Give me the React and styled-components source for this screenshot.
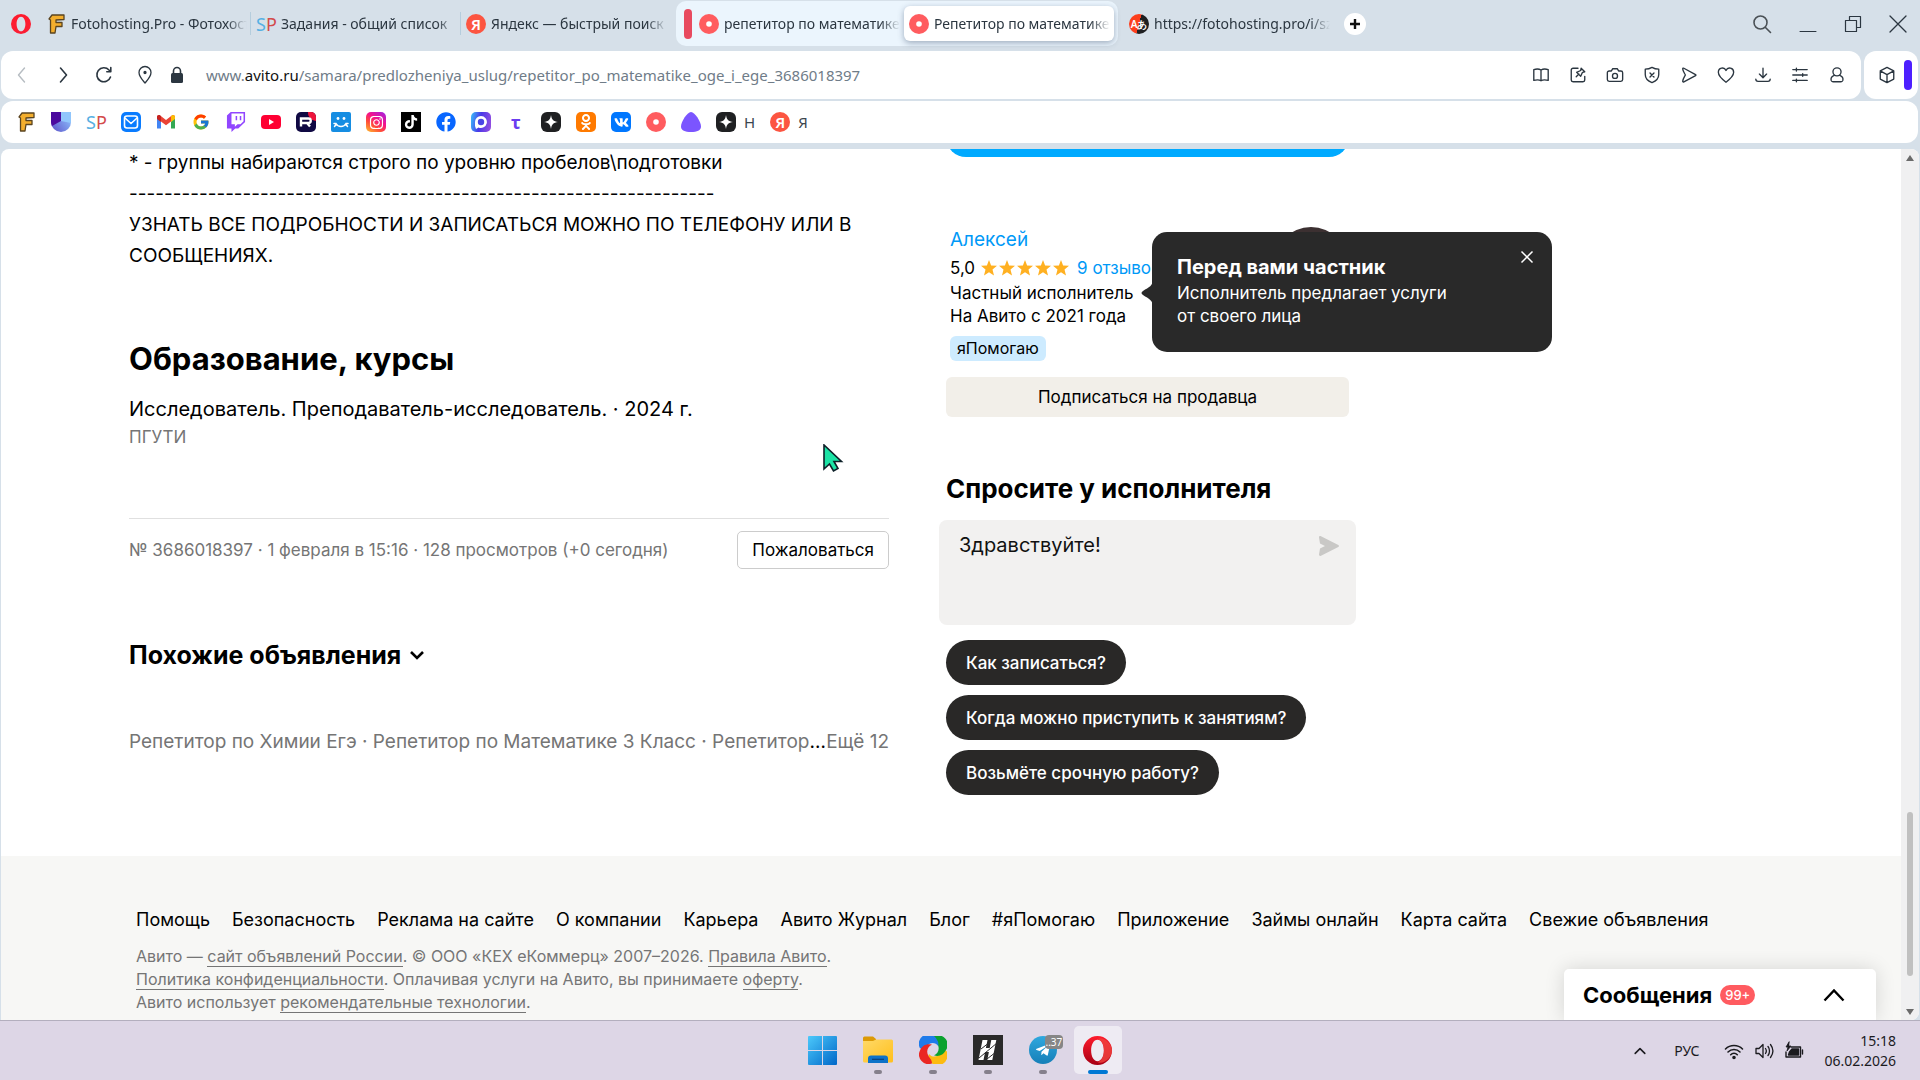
import React from "react";
import styled, { createGlobalStyle, css } from "styled-components";
import { FaTwitch, FaVk, FaOdnoklassniki, FaFacebook, FaInstagram, FaTelegramPlane, FaTiktok } from "react-icons/fa";
import { FcGoogle } from "react-icons/fc";

const Global = createGlobalStyle`
  * { box-sizing: border-box; }
  body { margin: 0; background: #d6e0e9; font-family: Inter, "Noto Sans", sans-serif; color: #000; }
  button { font: inherit; color: inherit; border: 0; padding: 0; background: none; cursor: pointer; }
  a { color: inherit; text-decoration: none; }
  h2, h3, p { margin: 0; }
  svg { display: block; flex: none; }
`;

const Shell = styled.div`
  display: flex;
  flex-direction: column;
  height: 100vh;
  overflow: hidden;
`;

/* ---------- browser chrome ---------- */

const Chrome = styled.header`
  font-family: "Noto Sans", "Open Sans", sans-serif;
  color: #2b3640;
`;

const TabBar = styled.div`
  display: flex;
  align-items: center;
  height: 51px;
  padding: 0 14px 4px 11px;
`;

const Tabs = styled.nav`
  display: flex;
  align-items: center;
  margin-left: 10px;
`;

const Tab = styled.button`
  display: flex;
  align-items: center;
  gap: 5px;
  width: 210px;
  height: 35px;
  padding: 0 4px 0 5px;
  font-size: 14px;
  text-align: left;
  ${(p) =>
    p.$divider &&
    css`
      background: linear-gradient(#b5cddd, #b5cddd) right center / 1px 23px no-repeat;
    `}
  ${(p) =>
    p.$active &&
    css`
      background: #fff;
      border-radius: 6px;
      box-shadow: 0 2px 6px rgba(60, 80, 110, 0.45);
    `}
`;

const TabTitle = styled.span`
  flex: 1;
  overflow: hidden;
  white-space: nowrap;
  line-height: 24px;
  mask-image: linear-gradient(90deg, #000 calc(100% - 20px), transparent);
`;

const TabGroup = styled.div`
  display: flex;
  align-items: center;
  height: 45px;
  margin: 0 6px 0 5px;
  padding: 0 4px 0 8px;
  border-radius: 10px;
  background: #ebf5fd;
`;

const GroupMark = styled.span`
  width: 8px;
  height: 30px;
  margin-right: 2px;
  border-radius: 4px;
  background: #e84a5f;
`;

const PlusButton = styled.button`
  display: grid;
  place-items: center;
  width: 22px;
  height: 22px;
  margin-left: 10px;
  border-radius: 50%;
  background: #fff;
`;

const WindowControls = styled.div`
  display: flex;
  align-items: center;
  gap: 27px;
  margin-left: auto;
`;

const AddressRow = styled.div`
  display: flex;
  gap: 3px;
  height: 48px;
  padding: 0 2px 0 1px;
`;

const Panel = styled.div`
  display: flex;
  align-items: center;
  border-radius: 12px;
  background: #fff;
`;

const AddressPanel = styled(Panel)`
  flex: 1;
  padding: 0 12px 0 9px;
`;

const SidePanel = styled(Panel)`
  gap: 7px;
  padding: 0 6px 0 13px;
`;

const PurpleMark = styled.span`
  width: 8px;
  height: 30px;
  border-radius: 4px;
  background: #4d1fff;
`;

const IconButton = styled.button`
  display: grid;
  place-items: center;
  width: ${(p) => p.$w || 24}px;
  height: 24px;
`;

const NavIcons = styled.div`
  display: flex;
  gap: 17px;
`;

const Address = styled.label`
  display: flex;
  flex: 1;
  margin-left: 9px;
  font-size: 15px;
  line-height: 24px;
  color: #6f7c88;
`;

const Domain = styled.span`
  color: #111;
`;

const PathInput = styled.input`
  flex: 1;
  padding: 0;
  border: 0;
  outline: 0;
  background: none;
  font: inherit;
  color: inherit;
`;

const ToolIcons = styled.div`
  display: flex;
  gap: 13px;
`;

const Bookmarks = styled.nav`
  display: flex;
  align-items: center;
  gap: 15px;
  height: 42px;
  margin: 2px 2px 6px 1px;
  padding-left: 15px;
  border-radius: 12px;
  background: #fff;
`;

const Bookmark = styled.a`
  display: flex;
  align-items: center;
  gap: 8px;
  font-size: 15px;
  color: #3b4650;
`;

const Tile = styled.span`
  display: grid;
  place-items: center;
  flex: none;
  width: 20px;
  height: 20px;
  color: ${(p) => p.$color || "#fff"};
  background: ${(p) => p.$bg || "none"};
  border-radius: ${(p) => p.$radius || 0}px;
  font-size: ${(p) => p.$size || 17}px;
  font-weight: ${(p) => p.$weight || 400};
  line-height: 20px;
`;

/* ---------- page ---------- */

const Viewport = styled.main`
  position: relative;
  display: flex;
  flex: 1;
  min-height: 0;
  margin: 0 1px;
  overflow: hidden;
  border-radius: 8px 8px 8px 0;
  background: #fff;
`;

const Page = styled.div`
  display: flex;
  flex: 1;
  flex-direction: column;
  min-width: 0;
  margin-top: -52px;
`;

const Columns = styled.div`
  display: grid;
  grid-template-columns: 760px 403px;
  column-gap: 57px;
  padding: 0 0 61px 128px;
`;

const Left = styled.article`
  min-width: 0;
  padding-top: 50px;
`;

const Description = styled.p`
  font-size: 19px;
  line-height: 31px;
  white-space: nowrap;
`;

const Title = styled.h2`
  margin-top: 68px;
  font-size: 31px;
  line-height: 40px;
`;

const Education = styled.p`
  margin-top: 16px;
  font-size: 20px;
  line-height: 28px;
  white-space: pre;
`;

const School = styled.p`
  font-size: 17px;
  line-height: 28px;
  color: #757575;
`;

const Meta = styled.div`
  display: flex;
  align-items: center;
  justify-content: space-between;
  margin-top: 67px;
  padding-top: 12px;
  border-top: 1px solid #e0e0e0;
  font-size: 17px;
  color: #757575;
`;

const Report = styled.button`
  height: 38px;
  padding: 0 14px;
  border: 1px solid #ccc;
  border-radius: 5px;
  color: #000;
`;

const Subtitle = styled.h3`
  display: flex;
  align-items: center;
  gap: 8px;
  margin-top: ${(p) => p.$top}px;
  font-size: ${(p) => p.$size}px;
  line-height: 34px;
  white-space: nowrap;
`;

const Related = styled.div`
  display: flex;
  margin-top: 56px;
  font-size: 19px;
  line-height: 28px;
`;

const RelatedList = styled.div`
  flex: 1;
  overflow: hidden;
  text-overflow: ellipsis;
  white-space: nowrap;
`;

const GreyText = styled.span`
  color: #757575;
`;

const Right = styled.aside`
  display: flex;
  flex-direction: column;
`;

const WriteButton = styled.button`
  height: 60px;
  border-radius: 20px;
  background: #00aaff;
`;

const Seller = styled.section`
  position: relative;
  display: flex;
  justify-content: space-between;
  height: 135px;
  margin-top: 69px;
  padding-left: 4px;
  font-size: 17px;
  line-height: 23px;
  white-space: nowrap;
`;

const SellerLink = styled.a`
  color: #0099f7;
`;

const SellerName = styled(SellerLink)`
  display: block;
  font-size: 19px;
  line-height: 28px;
`;

const Rating = styled.div`
  display: flex;
  align-items: center;
  gap: 8px;
  line-height: 28px;
`;

const Stars = styled.span`
  display: flex;
  gap: 2px;
  margin-left: -2px;
`;

const HelpTag = styled.span`
  display: inline-block;
  height: 25px;
  margin-top: 8px;
  padding: 0 7px;
  border-radius: 6px;
  background: #cdebff;
  font-size: 16px;
  line-height: 25px;
`;

const Avatar = styled.span`
  width: 76px;
  height: 76px;
  margin-top: 1px;
  border-radius: 50%;
  background: #3c3031;
`;

const Tooltip = styled.div`
  position: absolute;
  top: 6px;
  left: 206px;
  width: 400px;
  height: 120px;
  padding: 20px 25px;
  border-radius: 15px;
  background: #292929;
  color: #fff;
  font-size: 17px;
  line-height: 23px;
`;

const TooltipTitle = styled.div`
  font-size: 20px;
  font-weight: 700;
  line-height: 30px;
`;

const TooltipArrow = styled.svg`
  position: absolute;
  top: 47px;
  left: -11px;
`;

const TooltipClose = styled.button`
  position: absolute;
  top: 18px;
  right: 18px;
`;

const Subscribe = styled.button`
  height: 40px;
  margin-top: 16px;
  border-radius: 6px;
  background: #f2efe9;
  font-size: 17px;
`;

const MessageForm = styled.form`
  display: flex;
  align-items: flex-start;
  height: 105px;
  margin: 14px -7px 15px;
  padding: 12px 17px 8px 20px;
  border-radius: 8px;
  background: #f2f1f0;
`;

const MessageInput = styled.textarea`
  flex: 1;
  height: 80px;
  padding: 0;
  border: 0;
  outline: 0;
  resize: none;
  background: none;
  font: 20px/26px Inter, "Noto Sans", sans-serif;
  color: #111;
`;

const SendButton = styled.button`
  margin-top: 4px;
`;

const Questions = styled.div`
  display: flex;
  flex-direction: column;
  align-items: flex-start;
  gap: 10px;
`;

const Question = styled.button`
  height: 45px;
  padding: 0 20px;
  border-radius: 23px;
  background: #292827;
  color: #fff;
  font-size: 17px;
  font-weight: 500;
  white-space: nowrap;
`;

const Footer = styled.footer`
  flex: 1;
  padding: 51px 0 0 135px;
  background: #f7f7f5;
`;

const FooterNav = styled.nav`
  display: flex;
  gap: 22px;
  font-size: 18px;
  line-height: 26px;
  white-space: nowrap;
`;

const Legal = styled.p`
  margin-top: 12px;
  font-size: 16px;
  line-height: 23px;
  color: #757575;
  a {
    border-bottom: 1px solid #757575;
  }
`;

const Messages = styled.button`
  position: absolute;
  right: 43px;
  bottom: 0;
  display: flex;
  align-items: center;
  width: 312px;
  height: 51px;
  padding: 0 31px 0 19px;
  border-radius: 5px 5px 0 0;
  background: #fff;
  box-shadow: 0 0 20px rgba(0, 0, 0, 0.14);
  font-size: 22px;
  font-weight: 700;
`;

const Count = styled.span`
  height: 20px;
  margin: 0 auto 0 8px;
  padding: 0 5px;
  border-radius: 10px;
  background: #ff5b60;
  color: #fff;
  font-size: 13px;
  font-weight: 500;
  line-height: 20px;
`;

const Scrollbar = styled.div`
  display: flex;
  flex-direction: column;
  align-items: center;
  justify-content: space-between;
  width: 18px;
  padding: 6px 0 5px;
  background: #f0f0f1;
`;

const Thumb = styled.span`
  width: 6px;
  height: 164px;
  margin: auto 0 33px;
  border-radius: 3px;
  background: #c0c0c0;
`;

/* ---------- taskbar ---------- */

const Taskbar = styled.footer`
  display: grid;
  grid-template-columns: 1fr auto 1fr;
  height: 60px;
  border-top: 1px solid #b3afbe;
  background: #ddd6e6;
  font-family: "Noto Sans", "Open Sans", sans-serif;
  color: #1b1b1f;
`;

const Apps = styled.div`
  grid-column: 2;
  display: flex;
  gap: 7px;
  padding: 5px 0;
`;

const AppButton = styled.button`
  display: flex;
  flex-direction: column;
  align-items: center;
  justify-content: flex-end;
  gap: 5px;
  width: 48px;
  height: 48px;
  border-radius: 5px;
  background: ${(p) => (p.$active ? "#eeebf3" : "none")};
  &::after {
    content: "";
    width: ${(p) => (p.$active ? 20 : 8)}px;
    height: 4px;
    border-radius: 2px;
    background: ${(p) => (p.$active ? "#0078d4" : p.$running ? "#85808c" : "transparent")};
  }
`;

const AppIcon = styled.span`
  position: relative;
  display: grid;
  place-items: center;
  width: 30px;
  height: 30px;
`;

const Telegram = styled.span`
  display: grid;
  place-items: center;
  width: 28px;
  height: 28px;
  border-radius: 50%;
  background: linear-gradient(#2fa8de, #167fb8);
  color: #fff;
  font-size: 16px;
`;

const AppBadge = styled.span`
  position: absolute;
  top: 0;
  left: 17px;
  height: 14px;
  padding: 0 1px;
  border-radius: 4px;
  background: #868686;
  color: #fff;
  font-size: 10px;
  line-height: 14px;
`;

const Tray = styled.div`
  display: flex;
  align-items: center;
  justify-content: flex-end;
  gap: 10px;
  padding: 0 24px 0 0;
  font-size: 14px;
`;

const Lang = styled.span`
  margin: 0 15px 0 16px;
`;

const Clock = styled.time`
  margin-left: 10px;
  line-height: 20px;
  text-align: right;
`;

const Pointer = styled.svg`
  position: absolute;
  top: 295px;
  left: 820px;
`;

/* ---------- drawings ---------- */

const Line = ({ size = 20, w = 1.5, children, ...rest }) => (
  <svg width={size} height={size} viewBox="0 0 20 20" fill="none" stroke="currentColor" strokeWidth={w} strokeLinecap="round" strokeLinejoin="round" {...rest}>
    {children}
  </svg>
);

const OperaRing = ({ size = 20, flat }) => (
  <svg width={size} height={size} viewBox="0 0 30 30">
    <defs>
      <linearGradient id={"ring" + size} x1="0" y1="0" x2="0" y2="1">
        <stop offset="0" stopColor="#ff1b2d" />
        <stop offset="1" stopColor={flat ? "#fa1e35" : "#a70014"} />
      </linearGradient>
    </defs>
    <path fillRule="evenodd" fill={`url(#ring${size})`} d="M15 0a15 15 0 1 0 0 30a15 15 0 1 0 0-30zM15 4c4 0 6.600 5 6.600 11s-2.600 11-6.600 11s-6.600-5-6.600-11s2.600-11 6.600-11z" />
    {!flat && <path fill="#f0443f" d="M15 3.200c2-1.400 5-1.200 7.500.3c4.500 2.600 7.500 7 7.500 11.500s-3 9-7.500 11.500c-2.500 1.500-5.500 1.700-7.500.3c4-.6 6.600-5.600 6.600-11.800s-2.600-11.200-6.600-11.800z" opacity=".8" />}
  </svg>
);

const LetterF = () => (
  <svg width="20" height="20" viewBox="0 0 20 20">
    <path d="M6 1h12v4.500l-8 .5v2.500h6v4h-6l-1 6.500h-4.500v-13l-1.500-1z" fill="#f3ae2d" stroke="#5a4420" strokeWidth="1.300" strokeLinejoin="round" />
  </svg>
);

const Red = styled.span`
  color: #d34b4b;
`;
const SpMark = () => (
  <Tile $size={18} $color="#56b0e3"><span>S<Red>P</Red></span></Tile>
);

const AvitoDot = () => (
  <svg width="20" height="20" viewBox="0 0 20 20"><circle cx="10" cy="10" r="10" fill="#ff5c5f" /><circle cx="10" cy="10" r="2.800" fill="#fff" /></svg>
);

const Yandex = () => <Tile $bg="#fc5541" $radius={10} $size={15} $weight={600}>Я</Tile>;

const Spark = () => (
  <Tile $bg="#1f2022" $radius={6}>
    <svg width="14" height="14" viewBox="0 0 14 14"><path fill="#fff" d="M7 0c.6 4.600 2.400 6.400 7 7c-4.600.6-6.400 2.400-7 7c-.6-4.600-2.400-6.400-7-7c4.600-.6 6.400-2.400 7-7z" /></svg>
  </Tile>
);

const Shield = () => (
  <svg width="20" height="20" viewBox="0 0 20 20">
    <defs><linearGradient id="sh" x1="0" y1="1" x2="1" y2=".2"><stop offset="0" stopColor="#5c50c8" /><stop offset="1" stopColor="#8fc4ff" /></linearGradient></defs>
    <path fill="url(#sh)" d="M0 0h20v10a10 10 0 0 1-20 0z" />
    <path fill="#4b0a9e" d="M0 0h10v9l-9 5a10 10 0 0 1-1-4z" />
    <path fill="#91c6fc" d="M10 0h10v11l-10-2z" />
  </svg>
);

const Mail = () => (
  <Tile $bg="#0a7cff" $radius={5}>
    <Line size={20} w={1.6}><rect x="3.500" y="4" width="13" height="12" rx="2.500" /><path d="M4.500 6.500l5.500 5 5.500-5" /></Line>
  </Tile>
);

const Gmail = () => (
  <svg width="20" height="20" viewBox="0 0 20 20">
    <path fill="#4285f4" d="M1 5v11.500h4v-7z" /><path fill="#34a853" d="M19 5v11.500h-4v-7z" />
    <path fill="#ea4335" d="M1 5c0-1.700 2-2.400 3.200-1.500l5.800 4.500 5.800-4.500c1.200-.9 3.200-.2 3.200 1.500l-4 4.500-5 3.800-5-3.800z" />
    <path fill="#fbbc04" d="M15 4.200l.8-.7c1.200-.9 3.200-.2 3.200 1.500v2l-4 3z" /><path fill="#c5221f" d="M5 4.200l-.8-.7c-1.200-.9-3.200-.2-3.200 1.500v2l4 3z" />
  </svg>
);

const YouTube = () => (
  <svg width="20" height="20" viewBox="0 0 20 20"><rect y="3" width="20" height="14" rx="4" fill="#ff0033" /><path d="M8 7l5 3-5 3z" fill="#fff" /></svg>
);

const Rutube = () => (
  <svg width="20" height="20" viewBox="0 0 20 20">
    <rect width="20" height="20" rx="5" fill="#100943" /><path d="M12 0h3a5 5 0 0 1 5 5v4a8 8 0 0 1-8-9z" fill="#ed143b" />
    <path d="M5 14.500v-8h7.500c3 0 3 4.500 0 4.500h-7M11 11l3 3.500" fill="none" stroke="#fff" strokeWidth="2.400" />
  </svg>
);

const Smile = () => (
  <svg width="20" height="20" viewBox="0 0 20 20">
    <rect width="20" height="20" rx="2" fill="#168de2" /><circle cx="7" cy="6.500" r="1.400" fill="#fff" /><circle cx="13" cy="6.500" r="1.400" fill="#fff" />
    <path d="M3 11.500h2c2 4 8 4 10 0h2M5 12.500l-1.500 2M15 12.500l1.500 2" fill="none" stroke="#fff" strokeWidth="1.500" strokeLinecap="round" />
  </svg>
);

const MaxMark = () => (
  <Tile $bg="linear-gradient(100deg,#3ac0fa,#4a38e8 45%,#9a50e0)" $radius={5}>
    <svg width="16" height="16" viewBox="0 0 16 16"><path d="M8 2a6 6 0 1 1-2.500 11.500l-2.500 1.500-1-3v-4a6 6 0 0 1 6-6z" fill="#fff" /><circle cx="8" cy="8" r="3.200" fill="#4a45e5" /></svg>
  </Tile>
);

const Alice = () => (
  <svg width="20" height="20" viewBox="0 0 20 20"><path d="M10 0c4 0 10 10 10 14.500c0 4-4 5.500-10 5.500s-10-1.500-10-5.500c0-4.500 6-14.500 10-14.500z" fill="#7b55ff" /></svg>
);

const Translate = () => (
  <Tile $bg="linear-gradient(105deg,#fc3f1d 50%,#1f2022 50%)" $radius={10} $size={10} $weight={600}>Aあ</Tile>
);

const bookmarks = [
  [LetterF], [Shield], [SpMark], [Mail], [Gmail],
  [() => <Tile $size={18}><FcGoogle /></Tile>],
  [() => <Tile $color="#9146ff" $size={20}><FaTwitch /></Tile>],
  [YouTube], [Rutube], [Smile],
  [() => <Tile $bg="linear-gradient(35deg,#ffc02e,#ff4a3a 35%,#f5128b 60%,#9a22e8)" $radius={5} $size={15}><FaInstagram /></Tile>],
  [() => <Tile $bg="#000" $size={14}><FaTiktok /></Tile>],
  [() => <Tile $color="#0866ff" $size={20}><FaFacebook /></Tile>],
  [MaxMark],
  [() => <Tile $color="#6a3df0" $size={18} $weight={700}>τ</Tile>],
  [Spark],
  [() => <Tile $bg="#ff7a00" $radius={5} $size={16}><FaOdnoklassniki /></Tile>],
  [() => <Tile $bg="#0077ff" $radius={5} $size={15}><FaVk /></Tile>],
  [AvitoDot], [Alice], [Spark, "Н"], [Yandex, "Я"],
];

const tools = [
  ["Чтение", <><path d="M10 4.500c-2-1.300-5-1.500-8-.5v12c3-.7 6-.7 8 .3c2-1 5-1 8-.3v-12c-3-1-6-.8-8 .5zM10 4.500v12" /></>],
  ["Заметки", <><path d="M10 2.500h-5.500a2 2 0 0 0-2 2v11a2 2 0 0 0 2 2h11a2 2 0 0 0 2-2v-4M8 12l3-3M13.500 2.500l4 4-2.500.5-2 4.500-4.500-4.500 4.500-2z" /></>],
  ["Снимок", <><path d="M3.500 5.500h2.500l1.500-2.500h5l1.500 2.500h2.500a2 2 0 0 1 2 2v7.500a2 2 0 0 1-2 2h-13a2 2 0 0 1-2-2v-7.500a2 2 0 0 1 2-2z" /><circle cx="10" cy="11" r="2.800" /></>],
  ["Защита", <><path d="M10 1.500c2.500 1.500 5 2 7.500 2v6c0 4.500-3.500 7.500-7.500 9c-4-1.500-7.500-4.500-7.500-9v-6c2.500 0 5-.5 7.500-2zM7.800 7.800l4.400 4.400M12.200 7.800l-4.400 4.400" /></>],
  ["Поделиться", <path d="M3 3.200c0-.7.700-1 1.300-.7l13 7c.5.300.5.900 0 1.200l-13 7c-.6.300-1.300 0-1.300-.7c.3-3 2-5 3-7c-1-2-2.700-4-3-6.800z" />],
  ["Избранное", <path d="M10 18c-4-3-8.500-6.500-8.500-11c0-5 6.500-6.500 8.500-2c2-4.500 8.500-3 8.500 2c0 4.500-4.500 8-8.500 11z" />],
  ["Загрузки", <path d="M10 2.500v10M6 9l4 4 4-4M2 14.500c0 2 1 2.500 2.500 2.500h11c1.500 0 2.500-.5 2.500-2.500" />],
  ["Настройки", <path d="M2 4h16M2 10h16M2 16h16M6 2.500v3M13 8.500v3M6 14.500v3" />],
  ["Профиль", <><circle cx="10" cy="6.500" r="4.500" /><path d="M7 10.500c-2.500 1-4 3.500-3.500 5.500c.3 1 1 1.500 2 1.500h9c1 0 1.700-.5 2-1.500c.5-2-1-4.500-3.500-5.500" /></>],
];

const footerLinks = ["Помощь", "Безопасность", "Реклама на сайте", "О компании", "Карьера", "Авито Журнал", "Блог", "#яПомогаю", "Приложение", "Займы онлайн", "Карта сайта", "Свежие объявления"];
const questions = ["Как записаться?", "Когда можно приступить к занятиям?", "Возьмёте срочную работу?"];

const BrowserTab = ({ icon, children, ...rest }) => (
  <Tab {...rest}>{icon}<TabTitle>{children}</TabTitle></Tab>
);

function Browser() {
  return (
    <Chrome>
      <TabBar>
        <OperaRing flat />
        <Tabs>
          <BrowserTab icon={<LetterF />} $divider>Fotohosting.Pro - Фотохостинг</BrowserTab>
          <BrowserTab icon={<SpMark />} $divider>Задания - общий список</BrowserTab>
          <BrowserTab icon={<Yandex />}>Яндекс — быстрый поиск</BrowserTab>
          <TabGroup>
            <GroupMark />
            <BrowserTab icon={<AvitoDot />}>репетитор по математике</BrowserTab>
            <BrowserTab icon={<AvitoDot />} $active>Репетитор по математике</BrowserTab>
          </TabGroup>
          <BrowserTab icon={<Translate />}>https://fotohosting.pro/i/sz</BrowserTab>
        </Tabs>
        <PlusButton aria-label="Новая вкладка"><svg width="12" height="12" viewBox="0 0 12 12"><path d="M6 1v10M1 6h10" stroke="#111" strokeWidth="2.400" /></svg></PlusButton>
        <WindowControls>
          <IconButton $w={19} aria-label="Поиск"><Line w={1.6} stroke="#4a5055"><circle cx="8.500" cy="8.500" r="6.500" /><path d="M13.500 13.500l5 5" /></Line></IconButton>
          <IconButton $w={18} aria-label="Свернуть"><Line w={1}><path d="M2 17.500h16" /></Line></IconButton>
          <IconButton $w={18} aria-label="Окно"><Line w={1.2}><path d="M2.500 6.500h11v11h-11zM6.500 6.500v-4h11v11h-4" /></Line></IconButton>
          <IconButton $w={18} aria-label="Закрыть"><Line w={1.3}><path d="M2 2l16 16M18 2l-16 16" /></Line></IconButton>
        </WindowControls>
      </TabBar>
      <AddressRow>
        <AddressPanel>
          <NavIcons>
            <IconButton aria-label="Назад"><Line w={1.4} stroke="#b7bdc2"><path d="M12.500 3l-6 7 6 7" /></Line></IconButton>
            <IconButton aria-label="Вперёд"><Line w={1.6}><path d="M7.500 3l6 7-6 7" /></Line></IconButton>
            <IconButton aria-label="Обновить"><Line w={1.6}><path d="M16.500 12a7 7 0 1 1-1.500-7l1.500 1.500M16.800 2.500v4.200h-4" /></Line></IconButton>
            <IconButton aria-label="Место"><Line w={1.3}><path d="M10 18c-3-3.500-6-6.500-6-10.500a6 6 0 0 1 12 0c0 4-3 7-6 10.500z" /><circle cx="10" cy="7.500" r="1" fill="currentColor" /></Line></IconButton>
          </NavIcons>
          <IconButton $w={40} aria-label="Сайт защищён"><svg width="14" height="18" viewBox="0 0 14 18"><rect x="1" y="7" width="12" height="10" rx="1.500" fill="#2b3640" /><path d="M3.500 8v-3a3.500 3.500 0 0 1 7 0v3" fill="none" stroke="#2b3640" strokeWidth="1.600" /></svg></IconButton>
          <Address>
            www.<Domain>avito.ru</Domain>
            <PathInput aria-label="Адрес" defaultValue="/samara/predlozheniya_uslug/repetitor_po_matematike_oge_i_ege_3686018397" />
          </Address>
          <ToolIcons>
            {tools.map(([name, d]) => (
              <IconButton key={name} aria-label={name}><Line size={18}>{d}</Line></IconButton>
            ))}
          </ToolIcons>
        </AddressPanel>
        <SidePanel>
          <IconButton $w={20} aria-label="Расширения"><Line size={18}><path d="M10 1.500l7.500 4v9l-7.500 4-7.500-4v-9zM2.500 5.500l7.500 4 7.500-4M10 9.500v9" /></Line></IconButton>
          <PurpleMark />
        </SidePanel>
      </AddressRow>
      <Bookmarks>
        {bookmarks.map(([Icon, label], i) => (
          <Bookmark key={i} href="#"><Icon />{label}</Bookmark>
        ))}
      </Bookmarks>
    </Chrome>
  );
}

function ListingColumn() {
  return (
    <Left>
      <Description>
        * - группы набираются строго по уровню пробелов\подготовки<br />
        {"-".repeat(67)}<br />
        УЗНАТЬ ВСЕ ПОДРОБНОСТИ И ЗАПИСАТЬСЯ МОЖНО ПО ТЕЛЕФОНУ ИЛИ В<br />
        СООБЩЕНИЯХ.
      </Description>
      <Title>Образование, курсы</Title>
      <Education>Исследователь. Преподаватель-исследователь. · 2024 г.</Education>
      <School>ПГУТИ</School>
      <Meta>
        <span>№ 3686018397 · 1 февраля в 15:16 · 128 просмотров (+0 сегодня)</span>
        <Report>Пожаловаться</Report>
      </Meta>
      <Subtitle $top={69} $size={25}>
        Похожие объявления
        <svg width="16" height="12" viewBox="0 0 16 12"><path d="M2 3l6 6 6-6" fill="none" stroke="#000" strokeWidth="2.600" /></svg>
      </Subtitle>
      <Related>
        <RelatedList>
          <GreyText>
            <a href="#">Репетитор по Химии Егэ</a> · <a href="#">Репетитор по Математике 3 Класс</a> · <a href="#">Репетитор по Физике</a>
          </GreyText>
        </RelatedList>
        <GreyText as="a" href="#">Ещё 12</GreyText>
      </Related>
    </Left>
  );
}

function SellerColumn() {
  return (
    <Right>
      <WriteButton aria-label="Написать" />
      <Seller>
        <div>
          <SellerName href="#">Алексей</SellerName>
          <Rating>
            5,0
            <Stars>
              {[0, 1, 2, 3, 4].map((i) => (
                <svg key={i} width="16" height="16" viewBox="0 0 16 16"><path fill="#ffb021" d="M8 0l2.100 5.400 5.900.4-4.500 3.700 1.500 6-5-3.300-5 3.300 1.500-6-4.500-3.700 5.900-.4z" /></svg>
              ))}
            </Stars>
            <SellerLink href="#">9 отзывов</SellerLink>
          </Rating>
          <div>Частный исполнитель</div>
          <div>На Авито с 2021 года</div>
          <HelpTag>яПомогаю</HelpTag>
        </div>
        <Avatar />
        <Tooltip role="tooltip">
          <TooltipArrow width="12" height="28" viewBox="0 0 12 28"><path d="M12 0c0 7-4 8-10 12c-2 1.200-2 2.800 0 4c6 4 10 5 10 12z" fill="#292929" /></TooltipArrow>
          <TooltipTitle>Перед вами частник</TooltipTitle>
          Исполнитель предлагает услуги<br />от своего лица
          <TooltipClose aria-label="Закрыть подсказку"><svg width="14" height="14" viewBox="0 0 14 14"><path d="M1.500 1.500l11 11M12.500 1.500l-11 11" stroke="#fff" strokeWidth="1.500" /></svg></TooltipClose>
        </Tooltip>
      </Seller>
      <Subscribe>Подписаться на продавца</Subscribe>
      <Subtitle $top={55} $size={26}>Спросите у исполнителя</Subtitle>
      <MessageForm>
        <MessageInput aria-label="Сообщение исполнителю" defaultValue="Здравствуйте!" />
        <SendButton type="button" aria-label="Отправить"><svg width="20" height="20" viewBox="0 0 20 20"><path fill="#c9c8c6" d="M0 1.500c0-1.300 1-1.700 2-1.200l17.300 8.700c.9.500.9 1.500 0 2l-17.300 8.700c-1 .5-2 .1-2-1.200l1-6 5-2.500-5-2.500z" /></svg></SendButton>
      </MessageForm>
      <Questions>
        {questions.map((q) => <Question key={q}>{q}</Question>)}
      </Questions>
    </Right>
  );
}

function SiteFooter() {
  return (
    <Footer>
      <FooterNav>{footerLinks.map((l) => <a key={l} href="#">{l}</a>)}</FooterNav>
      <Legal>
        Авито — <a href="#">сайт объявлений России</a>. © ООО «КЕХ еКоммерц» 2007–2026. <a href="#">Правила Авито</a>.<br />
        <a href="#">Политика конфиденциальности</a>. Оплачивая услуги на Авито, вы принимаете <a href="#">оферту</a>.<br />
        Авито использует <a href="#">рекомендательные технологии</a>.
      </Legal>
    </Footer>
  );
}

function SystemBar() {
  return (
    <Taskbar>
      <Apps>
        <AppButton aria-label="Пуск"><AppIcon><svg width="29" height="29" viewBox="0 0 29 29"><defs><linearGradient id="win" x1="0" y1="0" x2="1" y2="1"><stop offset="0" stopColor="#4cc9fb" /><stop offset="1" stopColor="#0067c8" /></linearGradient></defs><path fill="url(#win)" d="M0 1a1 1 0 0 1 1-1h13v14h-14zM15 0h13a1 1 0 0 1 1 1v13h-14zM0 15h14v14h-13a1 1 0 0 1-1-1zM15 15h14v13a1 1 0 0 1-1 1h-13z" /></svg></AppIcon></AppButton>
        <AppButton $running aria-label="Проводник"><AppIcon><svg width="30" height="28" viewBox="0 0 30 28"><defs><linearGradient id="fold" x1="0" y1="0" x2="1" y2="1"><stop offset="0" stopColor="#ffd968" /><stop offset="1" stopColor="#ffbf1c" /></linearGradient></defs><path fill="#dc9a06" d="M0 2a1.500 1.500 0 0 1 1.500-1.500h8.500l3 2.500v5h-13z" /><path fill="url(#fold)" d="M0 5h10l3-1.500h15.500a1.500 1.500 0 0 1 1.500 1.500v20a1.500 1.500 0 0 1-1.500 1.500h-27a1.500 1.500 0 0 1-1.500-1.500z" /><path fill="#0d72c8" d="M5 27v-4.500a3 3 0 0 1 3-3h14a3 3 0 0 1 3 3v4.500z" /><path d="M9 23.300h12" stroke="#0a3f78" strokeWidth="1.200" /></svg></AppIcon></AppButton>
        <AppButton $running aria-label="ShareX"><AppIcon>
          <svg width="28" height="28" viewBox="0 0 28 28">
            <path fill="#fcbb11" d="M27.500 15a9.500 9.500 0 0 1-17.500 9c-1-2-1-4 0-6c3 4 10 3.500 12-3c1.500-1.500 4-1.500 5.500 0z" />
            <path fill="#0ba12f" d="M14 .8a9.500 9.500 0 0 1 12.500 14c-2 4-7 6.500-11.500 4.500c4-1.500 6.500-7 3-11.500c-1.500-3-4-4-4-7z" />
            <path fill="#1f7bea" d="M.8 12a9.500 9.500 0 0 1 17-8.500c1.500 2 1.800 4 1.500 6.500c-3-4-9-4-12 1c-1.500 2-4.500 2.500-6.500 1z" />
            <path fill="#ea2723" d="M13 27.400a9.500 9.500 0 0 1-12-13c2-5 7-7 12-5.700c-4 1.500-6 6-4 10.300c1 3 4 4 4 8.400z" />
          </svg>
        </AppIcon></AppButton>
        <AppButton $running aria-label="H"><AppIcon><svg width="30" height="30" viewBox="0 0 30 30"><path fill="#2a2a2a" d="M0 0h30v30h-30z" /><path fill="#fff" d="M9.500 5h5l-1.600 8h3.800l1.600-8h5l-4 20h-5l1.600-8h-3.800l-1.600 8h-5z" /><path d="M8 14l9-7M6 23l18-15M14 24l9-7" stroke="#2a2a2a" strokeWidth="1" /></svg></AppIcon></AppButton>
        <AppButton $running aria-label="Telegram"><AppIcon><Telegram><FaTelegramPlane /></Telegram><AppBadge>..37</AppBadge></AppIcon></AppButton>
        <AppButton $active aria-label="Opera"><AppIcon><OperaRing size={29} /></AppIcon></AppButton>
      </Apps>
      <Tray>
        <Line size={16} w={2}><path d="M4 13l6-6 6 6" /></Line>
        <Lang>РУС</Lang>
        <Line w={1.6}><path d="M1.500 8a12 12 0 0 1 17 0M4 11a8.500 8.500 0 0 1 12 0M6.700 13.700a4.700 4.700 0 0 1 6.600 0" /><circle cx="10" cy="16.500" r="1" fill="currentColor" /></Line>
        <Line w={1.3}><path d="M2 7.500h3l4-4v13l-4-4h-3zM11.500 7.500c1 1.500 1 3.500 0 5M14 5.500c2 2.500 2 6.500 0 9M16.500 3.500c3 4 3 9 0 13" /></Line>
        <Line w={1.4}><path d="M7 6h9.500v10h-14.500v-5M18.500 9v4" /><path d="M8 8h6.500v6h-10l1-3z" fill="currentColor" /><path d="M5 1l-3 5h2l-1 4 4-5h-2z" fill="currentColor" strokeWidth=".8" /></Line>
        <Clock>15:18<br />06.02.2026</Clock>
      </Tray>
    </Taskbar>
  );
}

export default function App() {
  return (
    <Shell>
      <Global />
      <Browser />
      <Viewport>
        <Page>
          <Columns>
            <ListingColumn />
            <SellerColumn />
          </Columns>
          <SiteFooter />
        </Page>
        <Scrollbar>
          <svg width="8" height="6" viewBox="0 0 8 6"><path d="M0 6l4-6 4 6z" fill="#6a6a6a" /></svg>
          <Thumb />
          <svg width="8" height="6" viewBox="0 0 8 6"><path d="M0 0l4 6 4-6z" fill="#6a6a6a" /></svg>
        </Scrollbar>
        <Messages>Сообщения<Count>99+</Count><svg width="22" height="14" viewBox="0 0 22 14"><path d="M1.500 12.500l9.500-10 9.500 10" fill="none" stroke="#000" strokeWidth="2.400" /></svg></Messages>
        <Pointer width="24" height="30" viewBox="0 0 24 30"><path d="M3 1v24l5.500-5 4 7 4.500-2.500-4-7h7.500z" fill="#1be3a5" stroke="#0d2028" strokeWidth="1.600" /></Pointer>
      </Viewport>
      <SystemBar />
    </Shell>
  );
}
